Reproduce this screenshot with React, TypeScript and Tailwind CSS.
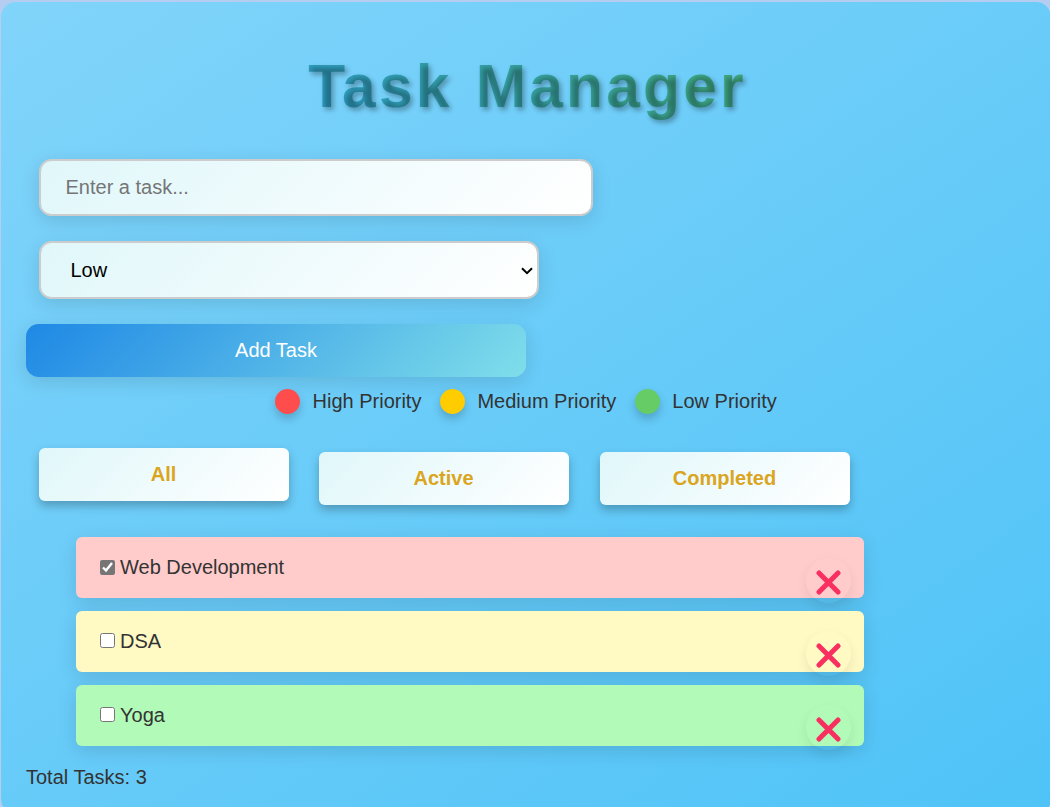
import { useState } from "react";

type Task = { id: number; name: string; done: boolean; color: string };

const initialTasks: Task[] = [
  { id: 1, name: "Web Development", done: true, color: "bg-[#ffcccb]" },
  { id: 2, name: "DSA", done: false, color: "bg-[#fff9c4]" },
  { id: 3, name: "Yoga", done: false, color: "bg-[#b2fab8]" },
];

const legend = [
  { label: "High Priority", color: "bg-[#ff4d4d]", space: "mr-[18.5px]" },
  { label: "Medium Priority", color: "bg-[#ffcc00]", space: "mr-[18.5px]" },
  { label: "Low Priority", color: "bg-[#66cc66]", space: "" },
];

const filters = [
  { label: "All", place: "ml-[13px]" },
  { label: "Active", place: "ml-[30px] mt-1" },
  { label: "Completed", place: "ml-[31px] mt-1" },
];

function Cross() {
  return (
    <svg viewBox="0 0 25 25" className="mt-1 size-[25px] shrink-0" fill="none">
      <path d="M3 3 22 22M22 3 3 22" stroke="#f92f60" strokeWidth="5" strokeLinecap="round" />
    </svg>
  );
}

export default function App() {
  const [tasks, setTasks] = useState(initialTasks);
  const toggle = (id: number) =>
    setTasks(tasks.map((t) => (t.id === id ? { ...t, done: !t.done } : t)));

  return (
    <div className="h-[807px] overflow-hidden bg-[#b5cdf0] pl-px pt-[2px] font-['Liberation_Sans',Arial,sans-serif] text-[20px] leading-[23px] text-[#333]">
      <main className="flex h-[812px] w-[1050px] flex-col items-start rounded-[15px] bg-[linear-gradient(145deg,#81d4fa,#4fc3f7)] pl-[25px]">
        <h1 className="mt-[50px] h-[69px] w-[1003px] bg-[linear-gradient(45deg,#2196f3,#4caf50)] bg-clip-text text-center text-[60.5px] font-bold leading-[69px] tracking-[3.2px] text-transparent [text-shadow:2.5px_2.5px_5px_rgba(0,0,0,0.3)] [word-spacing:3px]">
          <span className="tracking-[-3px]">T</span>ask Manager
        </h1>
        <input
          placeholder="Enter a task..."
          className="ml-[13px] mt-[38px] h-[57px] w-[554px] rounded-[12.5px] border-2 border-[#ccc] bg-[linear-gradient(135deg,#e0f7fa,#ffffff)] pl-[24.5px] shadow-[0_5px_19px_rgba(0,0,0,0.12)] placeholder:text-[#757575]"
        />
        <div className="relative ml-[13px] mt-[25px]">
          <select className="block h-[58px] w-[500px] appearance-none rounded-[12.5px] border-2 border-[#ccc] bg-[linear-gradient(135deg,#e0f7fa,#ffffff)] pl-[29.5px] text-black shadow-[0_5px_19px_rgba(0,0,0,0.12)]">
            <option>Low</option>
            <option>Medium</option>
            <option>High</option>
          </select>
          <svg viewBox="0 0 12 8" className="pointer-events-none absolute right-[6px] top-[26px] h-2 w-3" fill="none">
            <path d="M1 1.2 6 6.2 11 1.2" stroke="#000" strokeWidth="2" />
          </svg>
        </div>
        <button className="mt-[25px] h-[53px] w-[500px] rounded-[12.5px] bg-[linear-gradient(135deg,#1e88e5,#80deea)] text-white shadow-[0_5px_19px_rgba(0,0,0,0.12)]">
          Add Task
        </button>
        <div className="ml-[249px] mt-3 flex h-[25px] items-center">
          {legend.map((l) => (
            <div key={l.label} className={`flex items-center ${l.space}`}>
              <span className={`mr-[12.5px] size-[25px] rounded-full shadow-[0_5px_10px_rgba(0,0,0,0.2)] ${l.color}`} />
              {l.label}
            </div>
          ))}
        </div>
        <div className="mt-[34px] flex items-start">
          {filters.map((f) => (
            <button
              key={f.label}
              className={`h-[53px] w-[250px] rounded-[6px] bg-[linear-gradient(135deg,#e0f7fa,#ffffff)] pr-px font-bold text-[#daa520] shadow-[0_5px_10px_rgba(0,0,0,0.25)] ${f.place}`}
            >
              {f.label}
            </button>
          ))}
        </div>
        <ul className="ml-[50px] mt-8 flex w-[788px] flex-col gap-[13px]">
          {tasks.map((t) => (
            <li
              key={t.id}
              className={`group flex h-[61px] items-center rounded-[6px] pl-6 pr-[13px] shadow-[0_5px_19px_rgba(0,0,0,0.12)] ${t.color}`}
            >
              <label className="flex flex-1 items-center gap-[5px]">
                <input type="checkbox" checked={t.done} onChange={() => toggle(t.id)} className="mb-[2px] size-[15px] accent-[#767676] group-first:mb-0" />
                {t.name}
              </label>
              <button
                aria-label="Delete"
                onClick={() => setTasks(tasks.filter((x) => x.id !== t.id))}
                className="mt-[23px] flex size-[45px] items-center justify-center rounded-full shadow-[0_5px_12px_rgba(0,0,0,0.08)] group-first:mt-[25px]"
              >
                <Cross />
              </button>
            </li>
          ))}
        </ul>
        <p className="mt-5">Total Tasks: {tasks.length}</p>
      </main>
    </div>
  );
}
